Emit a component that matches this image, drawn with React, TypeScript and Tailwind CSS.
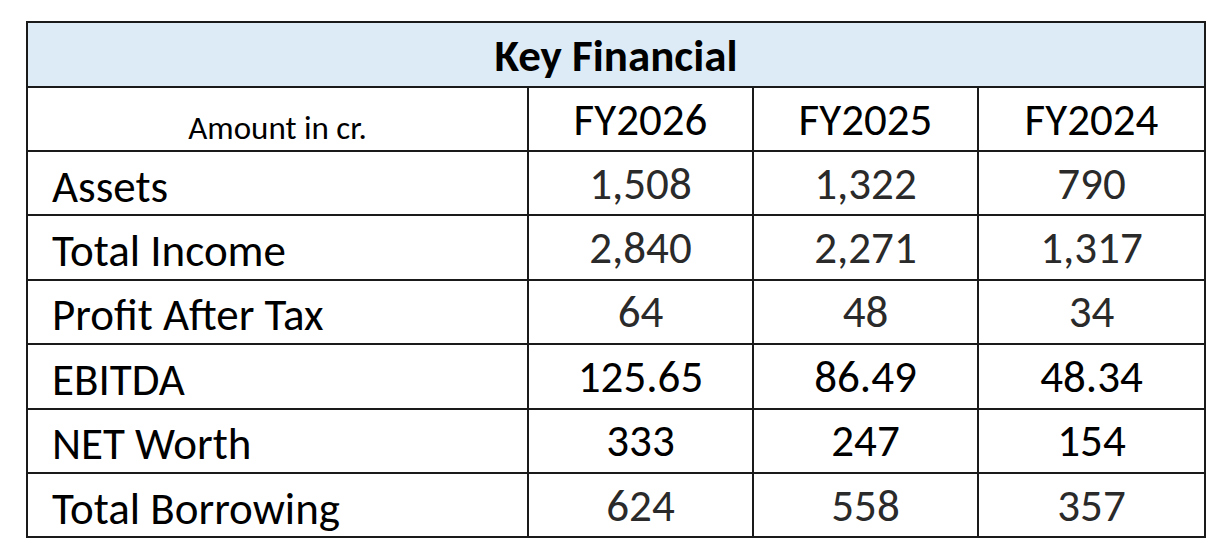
import React from "react";

const rows: { label: string; values: string[]; dark?: boolean }[] = [
  { label: "Assets", values: ["1,508", "1,322", "790"] },
  { label: "Total Income", values: ["2,840", "2,271", "1,317"] },
  { label: "Profit After Tax", values: ["64", "48", "34"] },
  { label: "EBITDA", values: ["125.65", "86.49", "48.34"], dark: true },
  { label: "NET Worth", values: ["333", "247", "154"], dark: true },
  { label: "Total Borrowing", values: ["624", "558", "357"] },
];

export default function App() {
  return (
    <div
      className="w-[1219px] h-[558px] bg-white pt-[21px] pl-[26px]"
      style={{ fontFamily: "Carlito, Calibri, Lato, 'Liberation Sans', sans-serif" }}
    >
      <table className="table-fixed border-collapse w-[1178px] border-2 border-[#1a1a1a] text-black">
        <colgroup>
          <col className="w-[501px]" />
          <col className="w-[225px]" />
          <col className="w-[225px]" />
          <col className="w-[227px]" />
        </colgroup>
        <thead>
          <tr className="h-[65px]">
            <th
              colSpan={4}
              className="bg-[#ddebf7] border-2 border-[#1a1a1a] text-[45px] font-bold leading-none text-center align-middle pt-[2px]"
            >
              Key Financial
            </th>
          </tr>
          <tr className="h-[64px]">
            <th className="border-2 border-[#1a1a1a] text-[33px] font-normal leading-none text-center align-bottom pb-[5px]">
              Amount in cr.
            </th>
            {["FY2026", "FY2025", "FY2024"].map((y) => (
              <th
                key={y}
                className="border-2 border-[#1a1a1a] text-[45px] font-normal leading-none text-center align-middle"
              >
                {y}
              </th>
            ))}
          </tr>
        </thead>
        <tbody>
          {rows.map((r) => (
            <tr key={r.label} className="h-[64.4px]">
              <td className="border-2 border-[#1a1a1a] text-[45px] leading-none pl-[24px] align-middle pt-[6px]">
                {r.label}
              </td>
              {r.values.map((v, i) => (
                <td
                  key={i}
                  className={
                    "border-2 border-[#1a1a1a] text-[45px] leading-none text-center align-middle " +
                    (r.dark ? "text-black" : "text-[#2a2a2a]")
                  }
                >
                  {v}
                </td>
              ))}
            </tr>
          ))}
        </tbody>
      </table>
    </div>
  );
}
